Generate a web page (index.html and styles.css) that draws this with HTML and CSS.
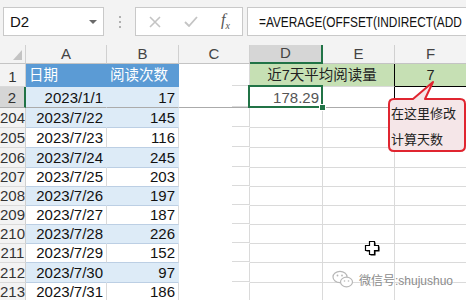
FILE: index.html
```
<!DOCTYPE html>
<html lang="zh-CN">
<head>
  <meta charset="UTF-8">
  <title>近7天平均阅读量</title>
  <link rel="stylesheet" href="styles.css">
</head>
<body>
  <div class="toolbar">
    <div class="namebox"><span>D2</span><span class="caret"></span></div>
    <div class="grip"><i></i><i></i><i></i></div>
    <div class="fbtns">
      <svg width="12" height="12" viewBox="0 0 12 12"><path d="M1 1L11 11M11 1L1 11" stroke="#c4c4c4" stroke-width="1.6" fill="none"/></svg>
      <svg width="14" height="11" viewBox="0 0 14 11"><path d="M1 6L5 10L13 1" stroke="#c4c4c4" stroke-width="1.8" fill="none"/></svg>
      <span class="fx">f<sub>x</sub></span>
    </div>
    <div class="formula"><span>=AVERAGE(OFFSET(INDIRECT(ADD</span></div>
  </div>

  <table class="sheet">
    <colgroup>
      <col class="w-hd"><col class="w-a"><col class="w-b"><col class="w-c"><col class="w-d"><col class="w-e"><col class="w-f">
    </colgroup>
    <tr class="r-head">
      <th class="corner"></th><th>A</th><th>B</th><th>C</th><th class="sel">D</th><th>E</th><th>F</th>
    </tr>
    <tr class="r1">
      <th>1</th>
      <td class="tb-head">日期</td>
      <td class="tb-head">阅读次数</td>
      <td class="c-col"></td>
      <td class="title" colspan="2">近7天平均阅读量</td>
      <td class="days">7</td>
    </tr>
    <tr class="r2 frozen">
      <th class="sel">2</th>
      <td class="band num">2023/1/1</td>
      <td class="band num">17</td>
      <td class="c-col"></td>
      <td class="active num">178.29<span class="handle"></span></td>
      <td class="edge"></td>
      <td></td>
    </tr>
    <tr class="h20"><th>204</th><td class="band num">2023/7/22</td><td class="band num">145</td><td class="c-col"></td><td></td><td></td><td></td></tr>
    <tr class="h20"><th>205</th><td class="plain num">2023/7/23</td><td class="plain num">116</td><td class="c-col"></td><td></td><td></td><td></td></tr>
    <tr class="h20"><th>206</th><td class="band num">2023/7/24</td><td class="band num">245</td><td class="c-col"></td><td></td><td></td><td></td></tr>
    <tr class="h19"><th>207</th><td class="plain num">2023/7/25</td><td class="plain num">203</td><td class="c-col"></td><td></td><td></td><td></td></tr>
    <tr class="h19"><th>208</th><td class="band num">2023/7/26</td><td class="band num">197</td><td class="c-col"></td><td></td><td></td><td></td></tr>
    <tr class="h19"><th>209</th><td class="plain num">2023/7/27</td><td class="plain num">187</td><td class="c-col"></td><td></td><td></td><td></td></tr>
    <tr class="h19"><th>210</th><td class="band num">2023/7/28</td><td class="band num">226</td><td class="c-col"></td><td></td><td></td><td></td></tr>
    <tr class="h19"><th>211</th><td class="plain num">2023/7/29</td><td class="plain num">152</td><td class="c-col"></td><td></td><td></td><td></td></tr>
    <tr class="h20"><th>212</th><td class="band num">2023/7/30</td><td class="band num">97</td><td class="c-col"></td><td></td><td></td><td></td></tr>
    <tr class="h19"><th>213</th><td class="plain num">2023/7/31</td><td class="plain num">186</td><td class="c-col"></td><td></td><td></td><td></td></tr>
  </table>

  <!-- bulle rouge -->
  <div class="callout">
    <svg width="80" height="75" viewBox="0 0 80 75">
      <path d="M6 19H25L45 2L37 19H72Q77 19 77 24V66Q77 71 72 71H6Q1 71 1 66V24Q1 19 6 19Z" fill="#f5e6e8" stroke="#e02530" stroke-width="2" stroke-linejoin="round"/>
    </svg>
    <div class="callout-text">在这里修改<br>计算天数</div>
  </div>

  <svg class="cursor" width="18" height="18" viewBox="0 0 18 18">
    <path d="M6.5 2.5H11.5V6.5H15.5V11.5H11.5V15.5H6.5V11.5H2.5V6.5H6.5Z" fill="#000"/>
    <path d="M5.5 1.5H10.5V5.5H14.5V10.5H10.5V14.5H5.5V10.5H1.5V5.5H5.5Z" fill="#fff" stroke="#000" stroke-width="1.2"/>
  </svg>

  <div class="watermark">
    <svg width="22" height="19" viewBox="0 0 22 19">
      <ellipse cx="8" cy="7" rx="7" ry="5.6" fill="none" stroke="#b8b8b8" stroke-width="1.2"/>
      <ellipse cx="14.5" cy="12" rx="6" ry="4.8" fill="#fff" stroke="#b8b8b8" stroke-width="1.2"/>
      <circle cx="5.5" cy="5.5" r="0.9" fill="#b8b8b8"/><circle cx="10" cy="5.5" r="0.9" fill="#b8b8b8"/>
      <circle cx="12.5" cy="11" r="0.8" fill="#b8b8b8"/><circle cx="16.5" cy="11" r="0.8" fill="#b8b8b8"/>
    </svg>
    <span>微信号:shujushuo</span>
  </div>
</body>
</html>
```

FILE: styles.css
```
body {
  margin: 0;
  width: 466px;
  height: 300px;
  overflow: hidden;
  position: relative;
  background: #fff;
  font-family: "Liberation Sans", "Noto Sans CJK SC", sans-serif;
  color: #111;
}

/* barre de formule */
.toolbar {
  height: 45px;
  background: #f3f3f3;
  display: flex;
  align-items: flex-start;
  padding-top: 7px;
  box-sizing: border-box;
}
.namebox {
  margin-left: 3px;
  width: 101px;
  height: 29px;
  box-sizing: border-box;
  background: #fff;
  border: 1px solid #c9c9c9;
  display: flex;
  align-items: center;
  justify-content: space-between;
  padding: 0 6px 0 6px;
  font-size: 15px;
}
.caret {
  width: 0;
  height: 0;
  border-left: 4px solid transparent;
  border-right: 4px solid transparent;
  border-top: 4px solid #6a6a6a;
}
.grip {
  width: 31px;
  height: 29px;
  display: flex;
  flex-direction: column;
  align-items: center;
  justify-content: center;
  gap: 3px;
}
.grip i {
  display: block;
  width: 2px;
  height: 2px;
  background: #b0b0b0;
}
.fbtns {
  width: 108px;
  height: 29px;
  box-sizing: border-box;
  background: #fff;
  border: 1px solid #c9c9c9;
  display: flex;
  align-items: center;
  padding-left: 13px;
}
.fbtns svg:nth-child(2) {
  margin-left: 23px;
}
.fx {
  margin-left: 23px;
  font-family: "Liberation Serif", serif;
  font-style: italic;
  font-size: 16px;
  color: #555;
}
.fx sub {
  font-size: 10px;
}
.formula {
  flex: 1;
  margin-left: 4px;
  height: 29px;
  box-sizing: border-box;
  background: #fff;
  border: 1px solid #c9c9c9;
  border-right: none;
  overflow: hidden;
  white-space: nowrap;
  padding-left: 11px;
  line-height: 27px;
  font-size: 15px;
}
.formula span {
  display: inline-block;
  transform: scaleX(0.79);
  transform-origin: left center;
}

/* feuille */
.sheet {
  table-layout: fixed;
  width: 467px;
  border-collapse: separate;
  border-spacing: 0;
  font-size: 15px;
}
.w-hd { width: 26px; }
.w-a { width: 81px; }
.w-b { width: 72px; }
.w-c { width: 71px; }
.w-d { width: 73px; }
.w-e { width: 72px; }
.w-f { width: 72px; }

.sheet th,
.sheet td {
  padding: 0 3px;
  border-right: 1px solid #dadada;
  border-bottom: 1px solid #dadada;
  line-height: 16px;
  vertical-align: bottom;
  padding-bottom: 1px;
  white-space: nowrap;
  overflow: hidden;
}
.sheet th {
  background: #f3f3f3;
  font-weight: normal;
  color: #333;
  text-align: center;
  padding: 0 0 1px 0;
  border-right-color: #d0d0d0;
}
.r-head { height: 18px; }
.r-head th {
  color: #444;
  border-bottom-color: #c4c4c4;
}
.r-head th.sel {
  background: #d6d6d6;
  border-bottom: 2px solid #217346;
}
.corner {
  position: relative;
}
.corner::after {
  content: "";
  position: absolute;
  right: 3px;
  bottom: 3px;
  width: 9px;
  height: 10px;
  background: #c3c3c3;
  clip-path: polygon(100% 0, 100% 100%, 0 100%);
}
tr > th.sel {
  background: #d6d6d6;
  border-right: 2px solid #217346;
}

.r1 { height: 23px; }
.r2 { height: 21px; }
.h20 { height: 20px; }
.h19 { height: 19px; }

.r1 td { padding-bottom: 2px; line-height: 18px; }
.tb-head {
  background: #5b9bd5;
  color: #fff;
  font-size: 14.5px;
  border-right-color: #5b9bd5 !important;
  border-bottom-color: #5b9bd5 !important;
}
.title,
.days {
  background: #c6e0b4;
  text-align: center;
  font-size: 14.5px;
  color: #222;
}
.title { border-right: 1px solid #000 !important; }
.days { border-bottom: 1px solid #000 !important; }
.edge { border-right: 1px solid #000 !important; }

.num { text-align: right; }
.band {
  background: #ddebf7;
  border-right-color: #ddebf7 !important;
  border-bottom-color: #bccfe4 !important;
}
.plain {
  border-bottom-color: #bccfe4 !important;
}
.c-col {
  border-bottom-color: transparent !important;
  background: linear-gradient(#dadada, #dadada) no-repeat right bottom / 17px 1px;
}
.frozen td,
.frozen th {
  border-bottom-color: #ababab !important;
}
.sheet tr:last-child td,
.sheet tr:last-child th { border-bottom-color: #dadada !important; }

.sheet .active {
  position: relative;
  overflow: visible;
  color: #555;
}
.sheet .active::after {
  content: "";
  position: absolute;
  left: -2px;
  top: -2px;
  right: -1px;
  bottom: -1px;
  border: 2px solid #217346;
}
.handle {
  position: absolute;
  right: -4px;
  bottom: -4px;
  width: 5px;
  height: 5px;
  background: #217346;
  border: 1px solid #fff;
  z-index: 1;
}

/* bulle */
.callout {
  position: absolute;
  left: 388px;
  top: 80px;
  width: 80px;
  height: 75px;
}
.callout svg {
  display: block;
}
.callout-text {
  position: absolute;
  left: 3px;
  top: 20px;
  font-size: 13px;
  line-height: 26px;
  color: #222;
  font-family: "Noto Sans CJK SC", sans-serif;
}

.cursor {
  position: absolute;
  left: 364px;
  top: 240px;
}

.watermark {
  position: absolute;
  left: 332px;
  top: 270px;
  display: flex;
  align-items: center;
  gap: 5px;
  font-size: 12px;
  color: #8c8c8c;
  text-shadow: 0 0 2px #fff;
}
```
